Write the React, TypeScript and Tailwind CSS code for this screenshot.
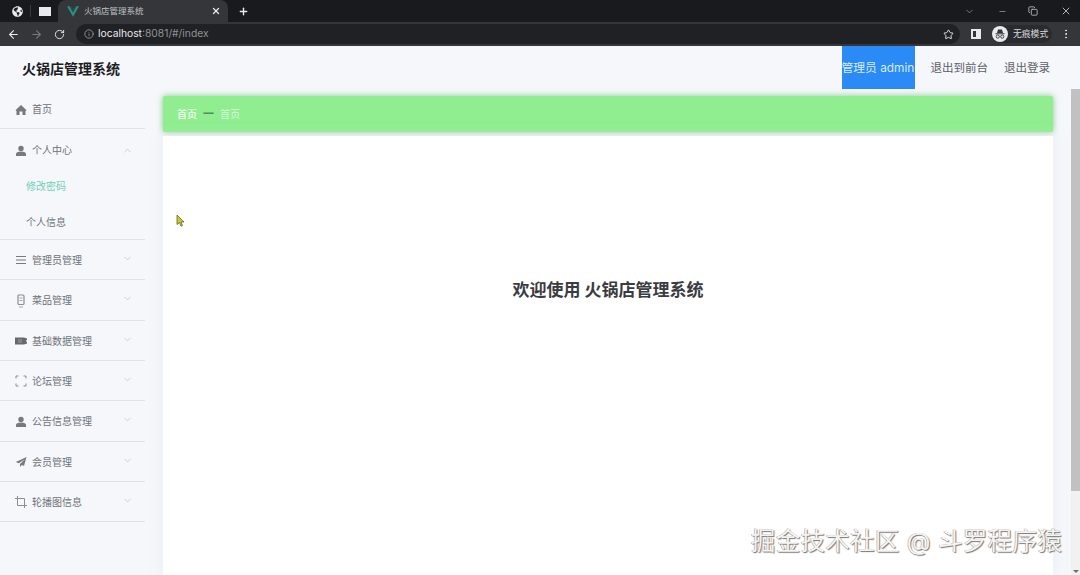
import { ChevronDown, ChevronUp, ArrowLeft, ArrowRight, RotateCw, Info, Star, X, Plus, Minus, MoreVertical, Copy } from "lucide-react"
import { FaGlobeAmericas } from "react-icons/fa"
import type { ReactNode } from "react"

const font = "font-['Inter','Noto_Sans_CJK_SC',sans-serif]"

function HomeIcon() {
    return (
        <svg width="12" height="12" viewBox="0 0 12 12" className="shrink-0">
            <path d="M6 1L.5 6.2 1.5 7V11h3V7.5h3V11h3V7l1 -.8z" fill="#77797e" />
        </svg>
    )
}

function UserIcon() {
    return (
        <svg width="12" height="12" viewBox="0 0 12 12" className="shrink-0">
            <circle cx="6" cy="3.4" r="2.7" fill="#77797e" />
            <path d="M1 11V9c0-1.6 1.6-2.5 5-2.5s5 .9 5 2.5v2z" fill="#77797e" />
        </svg>
    )
}

const menus: { label: string; h: string; icon: ReactNode }[] = [
    {
        label: "管理员管理",
        h: "h-[40px]",
        icon: (
            <svg width="12" height="12" viewBox="0 0 12 12" className="shrink-0">
                <path d="M1 2.5h10M1 6h10M1 9.5h10" stroke="#77797e" strokeWidth="1.2" />
            </svg>
        ),
    },
    {
        label: "菜品管理",
        h: "h-[41px]",
        icon: (
            <svg width="12" height="14" viewBox="0 0 12 14" className="shrink-0">
                <rect x="3" y="1" width="6" height="9.5" rx="1" fill="none" stroke="#8b8d92" strokeWidth="1.2" />
                <path d="M4.5 4h3M4.5 6.5h3M4 13h4" stroke="#a5a7ab" strokeWidth="1" />
            </svg>
        ),
    },
    {
        label: "基础数据管理",
        h: "h-[40px]",
        icon: (
            <svg width="12" height="12" viewBox="0 0 12 12" className="shrink-0">
                <path d="M0 2.5h9l3 1v1.5l-1.5 1L12 7v1.5l-3 1H0z" fill="#66686d" />
                <path d="M3 5h4M3 7h4" stroke="#b5b7bb" strokeWidth=".7" />
            </svg>
        ),
    },
    {
        label: "论坛管理",
        h: "h-[40px]",
        icon: (
            <svg width="12" height="12" viewBox="0 0 12 12" className="shrink-0">
                <path d="M1 3.5V1h2.5M8.5 1H11v2.5M11 8.5V11H8.5M3.5 11H1V8.5" fill="none" stroke="#8b8d92" strokeWidth="1" />
            </svg>
        ),
    },
    {
        label: "公告信息管理",
        h: "h-[41px]",
        icon: <UserIcon />,
    },
    {
        label: "会员管理",
        h: "h-[40px]",
        icon: (
            <svg width="12" height="12" viewBox="0 0 12 12" className="shrink-0">
                <path d="M11.5 1L.8 6l3 1.3L10 3 5 8v3l1.8-2 2.2 1z" fill="#77797e" />
            </svg>
        ),
    },
    {
        label: "轮播图信息",
        h: "h-[40px]",
        icon: (
            <svg width="12" height="12" viewBox="0 0 12 12" className="shrink-0">
                <path d="M2.5 0v9.5H12M0 2.5h9.5V12" fill="none" stroke="#8b8d92" strokeWidth="1" />
            </svg>
        ),
    },
]

function BrowserBar() {
    return (
        <div className="h-[46px] shrink-0 bg-[#35363a]">
            {/* Tabs */}
            <div className="h-[22px] bg-[#191a1d] flex items-center text-[#e8eaed]">
                <FaGlobeAmericas size={11} className="ml-[12px] shrink-0" />
                <div className="ml-[7px] w-[1px] h-[12px] bg-[#3a3b3f] shrink-0" />
                <div className="ml-[8px] w-[12px] h-[9px] bg-[#e8eaed] shrink-0" />
                <div className="ml-[7px] w-[170px] h-[22px] bg-[#35363a] rounded-t-lg flex items-center pl-[9px] pr-[7px]">
                    <svg width="12" height="11" viewBox="0 0 14 12" className="shrink-0">
                        <path d="M0 0h3l4 7 4-7h3L7 12z" fill="#2f8f7e" />
                        <path d="M3 0h2l2 3.5L9 0h2L7 7z" fill="#25504f" />
                    </svg>
                    <span className="ml-[5px] text-[8.5px] text-[#bfc1c5] whitespace-nowrap">火锅店管理系统</span>
                    <X size={10} className="ml-auto" strokeWidth={3} />
                </div>
                <Plus size={11} className="ml-[10px]" strokeWidth={3} />
                <ChevronDown size={11} className="ml-[715px] text-[#7d7f83]" />
                <Minus size={9} className="ml-[23px] text-[#9a9ca0]" />
                <Copy size={10} className="ml-[21px] text-[#c0c2c6]" />
                <X size={12} className="ml-[22px] text-[#b0b2b6]" />
            </div>
            {/* Address bar */}
            <div className="h-[24px] flex items-center text-[#e8eaed]">
                <ArrowLeft size={13} className="ml-[7px]" />
                <ArrowRight size={13} className="ml-[10px] text-[#77797d]" />
                <RotateCw size={11} className="ml-[11px]" />
                <div className="ml-[11px] w-[884px] h-[20px] rounded-full bg-[#202124] flex items-center pl-[8px] pr-[6px]">
                    <Info size={10} className="text-[#9a9ca0]" />
                    <span className="ml-[4px] text-[10.3px]">localhost</span>
                    <span className="text-[10.3px] text-[#8f9195]">:8081/#/index</span>
                    <Star size={11} className="ml-auto" />
                </div>
                <div className="ml-[11px] w-[10px] h-[10px] border-2 border-[#e8eaed] border-r-[5px] shrink-0" />
                <div className="ml-[11px] w-[60px] h-[18px] rounded-full bg-[#2a2b2e] flex items-center shrink-0">
                    <svg width="16" height="16" viewBox="0 0 16 16" className="shrink-0">
                        <circle cx="8" cy="8" r="8" fill="#e8eaed" />
                        <path d="M5 7l1-3.5h4L11 7zM3.5 7.3h9v.9h-9z" fill="#35363a" />
                        <circle cx="5.8" cy="10.6" r="1.6" fill="none" stroke="#35363a" strokeWidth=".9" />
                        <circle cx="10.2" cy="10.6" r="1.6" fill="none" stroke="#35363a" strokeWidth=".9" />
                    </svg>
                    <span className="ml-[5px] text-[8.8px] text-[#d5d7da] whitespace-nowrap">无痕模式</span>
                </div>
                <MoreVertical size={12} className="ml-[8px]" />
            </div>
        </div>
    )
}

function MenuRow({ label, icon, h }: { label: string; icon: ReactNode; h: string }) {
    return (
        <div className={`${h} border-b border-[#dfe2e8] flex items-center pl-[15px] pr-[12px] pt-[1px] text-[#6f7278]`}>
            {icon}
            <span className="ml-[5px] text-[10px]">{label}</span>
            <ChevronDown size={11} className="ml-auto -translate-y-[2px] text-[#c6c9cf]" />
        </div>
    )
}

export default function App() {
    return (
        <div className={`h-[575px] w-[1080px] overflow-hidden flex flex-col bg-[#f5f7fb] ${font}`}>
            <BrowserBar />

            <div className="flex-1 flex min-h-0">
                <div className="flex-1 min-w-0 flex flex-col">
                    {/* Header */}
                    <div className="h-[43px] shrink-0 flex items-center">
                        <h1 className="ml-[22px] mt-[2px] text-[14px] font-bold text-[#1d1d1f]">火锅店管理系统</h1>
                        <div className="ml-auto w-[73px] h-[43px] bg-[#2a8af6] flex items-center pt-[3px] whitespace-nowrap overflow-hidden text-[11.8px] text-[#d9ecff]">
                            管理员 admin
                        </div>
                        <span className="ml-[16px] mt-[3px] text-[11.5px] text-[#5d6066]">退出到前台</span>
                        <span className="ml-[16px] mr-[21px] mt-[3px] text-[11.5px] text-[#5d6066]">退出登录</span>
                    </div>

                    <div className="flex-1 flex min-h-0">
                        {/* Sidebar */}
                        <aside className="w-[145px] shrink-0 mt-[1px]">
                            <div className="h-[39px] border-b border-[#dfe2e8] flex items-center pl-[15px] pt-[1px] text-[#6f7278]">
                                <HomeIcon />
                                <span className="ml-[5px] text-[10px]">首页</span>
                            </div>
                            <div className="h-[111px] border-b border-[#dfe2e8] pt-[14px]">
                                <div className="flex items-center pl-[15px] pr-[12px] text-[#6f7278]">
                                    <UserIcon />
                                    <span className="ml-[5px] text-[10px]">个人中心</span>
                                    <ChevronUp size={11} className="ml-auto text-[#c6c9cf]" />
                                </div>
                                <div className="mt-[21px] pl-[26px] text-[10px] text-[#6fcfb8]">修改密码</div>
                                <div className="mt-[21px] pl-[26px] text-[10px] text-[#6f7278]">个人信息</div>
                            </div>
                            {menus.map((m) => (
                                <MenuRow key={m.label} label={m.label} icon={m.icon} h={m.h} />
                            ))}
                        </aside>

                        {/* Content */}
                        <main className="ml-[18px] w-[890px] shrink-0 mt-[7px] flex flex-col relative">
                            <div className="h-[36px] shrink-0 rounded-[2px] bg-[#90ee90] shadow-[0_0_6px_rgba(110,190,110,0.8)] flex items-center pl-[14px] text-[10px] text-[#f4fff4]">
                                <span className="font-medium">首页</span>
                                <span className="mx-[6px] text-[11px] font-bold text-[#4f8f5f]">一</span>
                                <span className="text-[#d8f8d8]">首页</span>
                            </div>
                            <div className="flex-1 bg-white mt-[4px] shadow-[0_0_10px_rgba(220,225,235,0.5)] flex justify-center pt-[142px]">
                                <h2 className="text-[17px] font-bold text-[#3a3c40] h-fit">欢迎使用 火锅店管理系统</h2>
                            </div>
                            {/* Mouse cursor */}
                            <svg width="9" height="13" viewBox="0 0 9 13" className="absolute left-[13px] top-[118px]">
                                <path d="M1 1l7 7H5l1.5 3.5-1.5.7L3.5 8.5 1 10.5z" fill="#c9c92e" stroke="#55551c" strokeWidth="0.7" />
                            </svg>
                            {/* Watermark */}
                            <div className="absolute right-[-9px] bottom-[15px] text-[24.5px] text-[#f4f4f4] whitespace-nowrap tracking-[0.3px] [text-shadow:1px_1px_1px_#777,-0.5px_-0.5px_0.5px_#999]">
                                掘金技术社区 @ 斗罗程序猿
                            </div>
                        </main>
                    </div>
                </div>

                {/* Scrollbar */}
                <div className="w-[9px] shrink-0 pt-[43px] flex flex-col">
                    <div className="h-[402px] bg-[#c1c1c1] shrink-0" />
                    <div className="flex-1 bg-[#f1f1f1] flex items-end justify-center pb-[2px]">
                        <div className="w-0 h-0 border-x-[3px] border-x-transparent border-t-[3px] border-t-[#707070]" />
                    </div>
                </div>
            </div>
        </div>
    )
}
